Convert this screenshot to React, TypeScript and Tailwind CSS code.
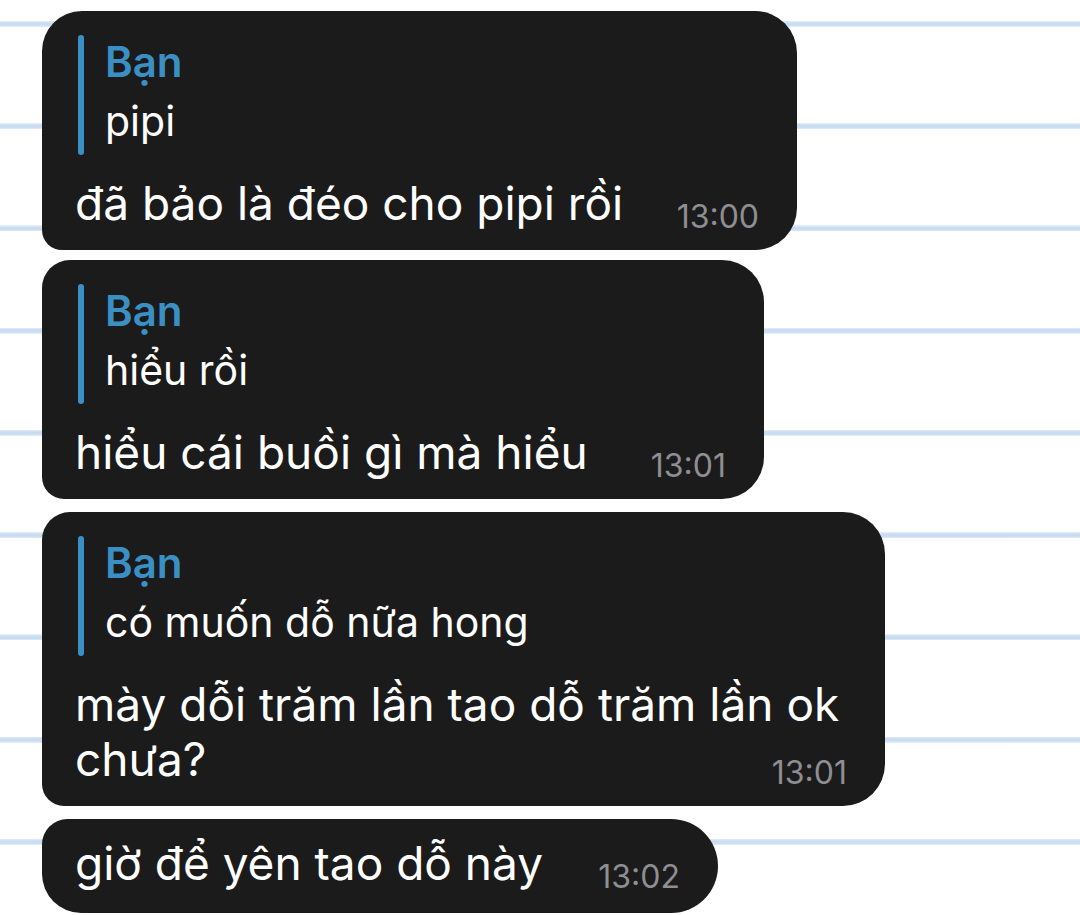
import React from "react";

type Msg = {
  reply?: string;
  text: string;
  time: string;
  width: string;
  corners: string;
};

const messages: Msg[] = [
  {
    reply: "pipi",
    text: "đã bảo là đéo cho pipi rồi",
    time: "13:00",
    width: "w-[755px]",
    corners: "rounded-tl-[40px] rounded-tr-[42px] rounded-br-[42px] rounded-bl-[20px]",
  },
  {
    reply: "hiểu rồi",
    text: "hiểu cái buồi gì mà hiểu",
    time: "13:01",
    width: "w-[722px]",
    corners: "rounded-tl-[28px] rounded-tr-[42px] rounded-br-[42px] rounded-bl-[22px]",
  },
  {
    reply: "có muốn dỗ nữa hong",
    text: "mày dỗi trăm lần tao dỗ trăm lần ok chưa?",
    time: "13:01",
    width: "w-[843px]",
    corners: "rounded-tl-[28px] rounded-tr-[42px] rounded-br-[42px] rounded-bl-[22px]",
  },
  {
    text: "giờ để yên tao dỗ này",
    time: "13:02",
    width: "w-[676px]",
    corners: "rounded-tl-[26px] rounded-tr-[48px] rounded-br-[48px] rounded-bl-[40px]",
  },
];

function Bubble({ m }: { m: Msg }) {
  return (
    <div
      className={`${m.width} ${m.corners} bg-[#1b1b1b] pl-[33px] pr-[38px] ${
        m.reply ? "pt-[24px] pb-[19px]" : "pt-[17px] pb-[22px]"
      }`}
    >
      {m.reply && (
        <div className="flex mb-[21px] ml-[3px]">
          <div className="w-[6px] rounded-full bg-[#3a90c4]" />
          <div className="pl-[21px]">
            <div className="text-[42px] leading-[53px] font-semibold text-[#3a90c4]">Bạn</div>
            <div className="text-[41px] leading-[67px] text-white">{m.reply}</div>
          </div>
        </div>
      )}
      <div className="text-[46px] leading-[55px] text-white">
        {m.text}
        <span className="float-right relative top-[13px] ml-[40px] text-[32px] leading-[55px] text-[#8e8e93]">
          {m.time}
        </span>
      </div>
    </div>
  );
}

export default function App() {
  return (
    <div
      className="min-h-screen bg-white bg-[repeating-linear-gradient(to_bottom,transparent_0px,transparent_21px,#e4eef9_21px,#c9dcf2_23px,#c9dcf2_25px,#e4eef9_27px,transparent_27px,transparent_102.25px)] pl-[42px] pt-[11px] flex flex-col"
      style={{ fontFamily: "Inter, 'Noto Sans', sans-serif" }}
    >
      <Bubble m={messages[0]} />
      <div className="h-[10px]" />
      <Bubble m={messages[1]} />
      <div className="h-[13px]" />
      <Bubble m={messages[2]} />
      <div className="h-[13px]" />
      <Bubble m={messages[3]} />
    </div>
  );
}
